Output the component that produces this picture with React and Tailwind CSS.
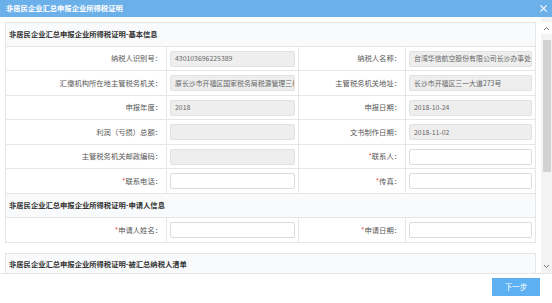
import React from 'react';

const font = { fontFamily: '"Noto Sans CJK SC", "Noto Sans", sans-serif' };

const basicRows = [
  [
    { label: '纳税人识别号', value: '430103696225389' },
    { label: '纳税人名称', value: '台湾华信航空股份有限公司长沙办事处' },
  ],
  [
    { label: '汇缴机构所在地主管税务机关', value: '原长沙市开福区国家税务局税源管理三科' },
    { label: '主管税务机关地址', value: '长沙市开福区三一大道273号' },
  ],
  [
    { label: '申报年度', value: '2018' },
    { label: '申报日期', value: '2018-10-24' },
  ],
  [
    { label: '利润（亏损）总额', value: '' },
    { label: '文书制作日期', value: '2018-11-02' },
  ],
  [
    { label: '主管税务机关邮政编码', value: '' },
    { label: '联系人', required: true, editable: true },
  ],
  [
    { label: '联系电话', required: true, editable: true },
    { label: '传真', required: true, editable: true },
  ],
];

const applicantRows = [
  [
    { label: '申请人姓名', required: true, editable: true },
    { label: '申请日期', required: true, editable: true },
  ],
];

const Label = ({ field }) => (
  <div className="flex items-center justify-end pr-[4px] border-r border-b border-[#e6e6e6] text-[#555] whitespace-nowrap">
    {field.required && <span className="text-[#e5463f]">*</span>}
    <span>{field.label}：</span>
  </div>
);

const Field = ({ field, last }) => (
  <div className={`flex items-center px-[3px] border-b border-[#e6e6e6] ${last ? '' : 'border-r'}`}>
    {field.editable ? (
      <div className="h-[16px] w-full rounded-[2px] border border-[#dcdcdc] bg-white" />
    ) : (
      <div className="h-[16px] w-full rounded-[2px] border border-[#e2e2e2] bg-[#eeeeee] pl-[4px] flex items-center overflow-hidden whitespace-nowrap text-[#666] text-[6.9px]">
        {field.value}
      </div>
    )}
  </div>
);

const Row = ({ pair, h }) => (
  <div className={`grid grid-cols-[161px_132px_107px_129px] ${h}`}>
    <Label field={pair[0]} />
    <Field field={pair[0]} />
    <Label field={pair[1]} />
    <Field field={pair[1]} last />
  </div>
);

const Header = ({ children, h }) => (
  <div className={`${h} flex items-center pl-[3px] bg-[#f9fafb] border-b border-[#e6e6e6] font-bold text-[#333]`}>
    {children}
  </div>
);

const App = () => {
  return (
    <div className="w-[552px] h-[303px] bg-white flex flex-col overflow-hidden text-[7.3px]" style={font}>
      {/* title bar */}
      <div className="h-[17px] shrink-0 bg-[#6cb0ea] flex items-center justify-between pl-[6px] pr-[3px]">
        <span className="text-white font-bold">非居民企业汇总申报企业所得税证明</span>
        <svg width="9" height="9" viewBox="0 0 10 10" className="mr-[1px]">
          <path d="M1.5 1.5 L8.5 8.5 M8.5 1.5 L1.5 8.5" stroke="#fff" strokeWidth="1.2" />
        </svg>
      </div>

      {/* body */}
      <div className="flex h-[256px] shrink-0">
        <div className="flex-1 overflow-hidden pl-[5px] pt-[5px]">
          <div className="w-[531px] border-l border-t border-r border-[#e6e6e6]">
            <Header h="h-[24px]">非居民企业汇总申报企业所得税证明-基本信息</Header>
            {basicRows.map((pair, i) => (
              <Row key={i} pair={pair} h={i % 2 === 0 ? 'h-[24px]' : 'h-[25px]'} />
            ))}
            <Header h="h-[24px]">非居民企业汇总申报企业所得税证明-申请人信息</Header>
            {applicantRows.map((pair, i) => (
              <Row key={i} pair={pair} h="h-[25px]" />
            ))}
          </div>
          <div className="w-[531px] mt-[10px] border border-[#e6e6e6]">
            <Header h="h-[21px]">非居民企业汇总申报企业所得税证明-被汇总纳税人清单</Header>
            <div className="h-[40px] bg-[#f9fafb]" />
          </div>
        </div>

        {/* scrollbar */}
        <div className="w-[11px] shrink-0 flex flex-col items-center pt-[5px] bg-[#f3f3f3]">
          <div className="h-[12px] w-full flex items-center justify-center bg-white">
            <svg width="7" height="5" viewBox="0 0 7 5">
              <path d="M1 4 L3.5 1.5 L6 4" fill="none" stroke="#777" strokeWidth="1" />
            </svg>
          </div>
          <div className="mt-[6px] h-[132px] w-[8px] bg-[#d2d2d2]" />
          <div className="flex-1" />
          <div className="h-[14px] w-full flex items-center justify-center">
            <svg width="7" height="5" viewBox="0 0 7 5">
              <path d="M1 1 L3.5 3.5 L6 1" fill="none" stroke="#777" strokeWidth="1" />
            </svg>
          </div>
        </div>
      </div>

      {/* footer */}
      <div className="flex-1 border-t border-[#e6e6e6] flex justify-end items-start pt-[4px] pr-[12px]">
        <button className="w-[48px] h-[18px] bg-[#5db1f3] text-white text-[7.5px] flex items-center justify-center">
          下一步
        </button>
      </div>
    </div>
  );
};

export default App;
